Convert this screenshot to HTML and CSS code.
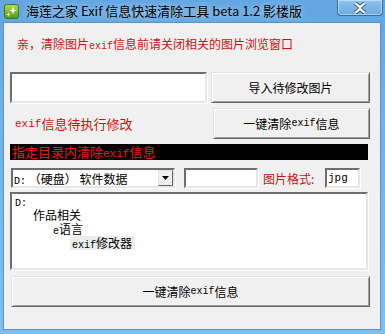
FILE: index.html
```html
<!DOCTYPE html>
<html>
<head>
  <title>海莲之家 Exif 信息快速清除工具 beta 1.2 影楼版</title>
  <link rel="stylesheet" href="styles.css">
</head>
<body>
  <div class="window">
    <div class="titlebar">
      <svg class="app-icon" width="15" height="15" viewBox="0 0 15 15">
        <defs>
          <linearGradient id="g" x1="0" y1="0" x2="0" y2="1">
            <stop offset="0" stop-color="#b6e04a"/>
            <stop offset="1" stop-color="#4c9a1c"/>
          </linearGradient>
        </defs>
        <rect x="0.5" y="0.5" width="14" height="14" rx="2.5" fill="url(#g)" stroke="#3f7a18"/>
        <path d="M9 2.5 L10 5.5 L13 6.5 L10 7.5 L9 10.5 L8 7.5 L5 6.5 L8 5.5 Z" fill="#fff"/>
        <path d="M4.5 8 L5 10 L7 10.5 L5 11 L4.5 13 L4 11 L2 10.5 L4 10 Z" fill="#fff"/>
      </svg>
      <span class="title">海莲之家 Exif 信息快速清除工具 beta 1.2 影楼版</span>
      <div class="close">
        <svg width="16" height="12" viewBox="0 0 16 12">
          <path d="M3 1 L8 5 L13 1 M3 11 L8 7 L13 11" stroke="#35557a" stroke-width="4" fill="none"/>
          <path d="M3 1 L8 5 L13 1 M3 11 L8 7 L13 11 M8 5 L8 7" stroke="#fff" stroke-width="2.2" fill="none"/>
        </svg>
      </div>
    </div>

    <div class="client">
      <div class="notice">亲，清除图片<span class="mono">exif</span>信息前请关闭相关的图片浏览窗口</div>

      <div class="row row-first">
        <div class="field path-field"></div>
        <div class="btn side-btn">导入待修改图片</div>
      </div>

      <div class="row row-second">
        <div class="status">
          <span class="mono">exif</span>信息待执行修改
        </div>
        <div class="btn side-btn">一键清除<span class="mono">exif</span>信息</div>
      </div>

      <div class="bar">指定目录内清除<span class="mono">exif</span>信息</div>

      <div class="row row-third">
        <div class="field combo">
          <span class="combo-text"><span class="mono">D:</span> （硬盘） 软件数据</span>
          <span class="combo-arrow">
            <svg width="7" height="4" viewBox="0 0 7 4"><path d="M0 0 H7 L3.5 4 Z" fill="#000"/></svg>
          </span>
        </div>
        <div class="field small-field"></div>
        <div class="format-label">图片格式:</div>
        <div class="field ext-field"><span class="mono">jpg</span></div>
      </div>

      <div class="field dir-list">
        <div class="dir"><span class="mono">D:</span></div>
        <div class="dir level-1">作品相关</div>
        <div class="dir level-2"><span class="mono">e</span>语言</div>
        <div class="dir level-3"><span class="selected"><span class="mono">exif</span>修改器</span></div>
      </div>

      <div class="btn big-btn">一键清除<span class="mono">exif</span>信息</div>
    </div>
  </div>
</body>
</html>
```

FILE: styles.css
```css
* {
  box-sizing: border-box;
}

body {
  margin: 0;
  width: 385px;
  height: 334px;
  overflow: hidden;
  font-family: "Noto Sans CJK SC", "Liberation Sans", sans-serif;
  font-size: 12px;
  color: #000;
}

.window {
  width: 385px;
  height: 334px;
  padding: 0 4px 4px 3px;
  background: linear-gradient(to bottom, #62a6e2, #6fb4ea 40%, #7cc0ee);
  display: flex;
  flex-direction: column;
}

.titlebar {
  height: 22px;
  display: flex;
  align-items: center;
}

.app-icon {
  margin: 0 7px 0 1px;
}

.title {
  font-size: 13px;
  color: #000;
  line-height: 22px;
  text-shadow: 0 0 6px rgba(255, 255, 255, 0.7);
}

.close {
  margin-left: auto;
  margin-right: -2px;
  align-self: flex-start;
  width: 46px;
  height: 16px;
  border: 1px solid #3d6c9c;
  border-top: none;
  border-radius: 0 0 4px 4px;
  background: linear-gradient(to bottom, #8ec2ee, #6aaae0);
  box-shadow: inset 0 0 0 1px rgba(255, 255, 255, 0.45);
  display: flex;
  align-items: center;
  justify-content: center;
}

.client {
  flex: 1;
  background: #f0f0f0;
  border: 1px solid #5d93c4;
  padding: 0 10px 0 6px;
  display: flex;
  flex-direction: column;
}

.mono {
  font-family: "Liberation Mono", monospace;
  font-size: 10px;
  vertical-align: 0;
}

.notice {
  margin: 13px 0 0 7px;
  line-height: 16px;
  color: #cc1010;
}

.row {
  display: flex;
}

.row-first {
  margin-top: 17px;
  height: 31px;
}

.row-second {
  margin-top: 5px;
  height: 31px;
}

.field {
  background: #fff;
  border: 2px solid;
  border-color: #6d6d6d #e6e6e6 #e6e6e6 #6d6d6d;
  box-shadow: 1px 1px 0 #fff;
}

.path-field {
  width: 197px;
}

.btn {
  background: #f0f0f0;
  border: 1px solid;
  border-color: #e3e3e3 #646464 #646464 #e3e3e3;
  box-shadow: inset 1px 1px 0 #fff, inset -1px -1px 0 #a0a0a0;
  display: flex;
  align-items: center;
  justify-content: center;
}

.side-btn {
  margin-left: 4px;
  width: 159px;
}

.status {
  width: 201px;
  padding-left: 5px;
  display: flex;
  align-items: center;
  font-size: 13px;
  color: #cc1010;
}

.status .mono {
  font-size: 11px;
}

.bar {
  margin-top: 5px;
  width: 358px;
  height: 16px;
  background: #000;
  color: #f01818;
  font-size: 13px;
  line-height: 16px;
  padding-left: 2px;
}

.bar .mono {
  font-size: 11px;
}

.row-third {
  margin-top: 8px;
  height: 20px;
  align-items: stretch;
}

.combo {
  margin-left: 1px;
  width: 164px;
  display: flex;
  align-items: center;
  padding-left: 1px;
}

.combo-text {
  flex: 1;
  white-space: nowrap;
}

.combo-arrow {
  width: 15px;
  height: 16px;
  background: #f0f0f0;
  border: 1px solid;
  border-color: #e3e3e3 #646464 #646464 #e3e3e3;
  display: flex;
  align-items: center;
  justify-content: center;
}

.small-field {
  margin-left: 9px;
  width: 74px;
}

.format-label {
  margin-left: 5px;
  width: 56px;
  color: #cc1010;
  display: flex;
  align-items: center;
}

.ext-field {
  margin-left: 6px;
  width: 35px;
  padding-left: 1px;
  display: flex;
  align-items: center;
}

.ext-field .mono {
  font-size: 11px;
}

.dir-list {
  margin-top: 4px;
  width: 358px;
  height: 78px;
  padding-left: 3px;
}

.dir {
  height: 14px;
  line-height: 14px;
  white-space: nowrap;
}

.level-1 {
  padding-left: 18px;
}

.level-2 {
  padding-left: 38px;
}

.level-3 {
  padding-left: 55px;
}

.selected {
  display: inline-block;
  height: 14px;
  background: #ececec;
  padding: 0 3px 0 2px;
  line-height: 14px;
}

.big-btn {
  margin: 6px 0 0 1px;
  width: 359px;
  height: 31px;
}
```
